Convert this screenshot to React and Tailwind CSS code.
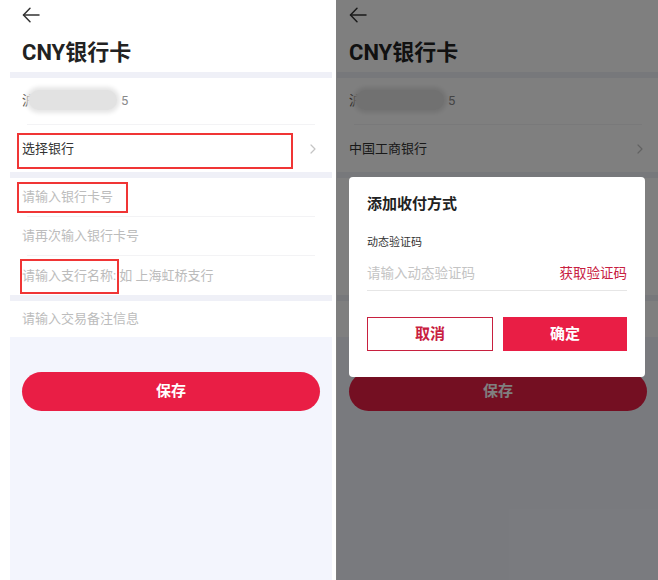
import React from "react";

const FONT = { fontFamily: "Roboto, 'Noto Sans CJK SC', 'Noto Sans', sans-serif" };

function Arrow() {
  return (
    <svg width="18" height="16" viewBox="0 0 18 16" fill="none" stroke="#333" strokeWidth="1.5" strokeLinecap="round" strokeLinejoin="round">
      <path d="M1.5 8H17" />
      <path d="M8 1.2L1.5 8L8 14.8" />
    </svg>
  );
}

function Chevron() {
  return (
    <svg width="6" height="10" viewBox="0 0 6 10" fill="none" stroke="#c4c4c4" strokeWidth="1.2" strokeLinecap="round" strokeLinejoin="round">
      <path d="M1 1L5 5L1 9" />
    </svg>
  );
}

function Sep() {
  return <div className="mx-[17px] h-px bg-[#f3f3f5]" />;
}

function Band() {
  return <div className="h-[6px] bg-[#eff0f7]" />;
}

function RedBox({ className }) {
  return <div className={"absolute border-2 border-[#f03535] " + className} />;
}

function Screen({ right }) {
  return (
    <div className="flex h-full w-[322px] flex-col bg-white">
      <div className="flex h-[72px] flex-col px-3 pt-[7px]">
        <Arrow />
        <div className="mt-[16px] text-[22px] font-bold leading-[28px] text-[#222]">CNY银行卡</div>
      </div>
      <Band />
      <div className="relative flex h-[46px] items-center px-3 text-[13px] text-[#444]">
        <span>沪</span>
        <div className="absolute left-[19px] top-[12px] h-[20px] w-[88px] rounded-full bg-[#e2e2e2] shadow-[0_0_4px_3px_#e6e6e6]" />
        <span className="ml-[86px] text-[#888]">5</span>
      </div>
      <Sep />
      <div className="relative flex h-[47px] items-center justify-between px-3 pr-[16px] text-[13px] text-[#333]">
        <span>{right ? "中国工商银行" : "选择银行"}</span>
        <Chevron />
        {!right && <RedBox className="left-[7px] top-[8px] h-[36px] w-[276px]" />}
      </div>
      <Band />
      <div className="relative flex h-[38px] items-center px-3 text-[13px] text-[#bcbcbc]">
        {!right && <span>请输入银行卡号</span>}
        {!right && <RedBox className="left-[7px] top-[4px] h-[31px] w-[111px]" />}
      </div>
      <Sep />
      <div className="flex h-[38px] items-center px-3 text-[13px] text-[#bcbcbc]">
        {!right && <span>请再次输入银行卡号</span>}
      </div>
      <Sep />
      <div className="relative flex h-[39px] items-center px-3 text-[13px] text-[#bcbcbc]">
        {!right && <span>请输入支行名称: 如 上海虹桥支行</span>}
        {!right && <RedBox className="left-[10px] top-[3px] h-[35px] w-[99px]" />}
      </div>
      <Band />
      <div className="flex h-[36px] items-center px-3 text-[13px] text-[#bcbcbc]">
        {!right && <span>请输入交易备注信息</span>}
      </div>
      <div className="flex flex-1 flex-col bg-[#f3f5fd] px-3 pt-[35px]">
        <div className="flex h-[39px] items-center justify-center rounded-full bg-[#e91e45] text-[15px] font-bold text-white">
          保存
        </div>
      </div>
    </div>
  );
}

export default function App() {
  return (
    <div className="flex h-[580px] w-[658px] overflow-hidden bg-white" style={FONT}>
      <div className="h-full w-[332px] pl-[10px]">
        <Screen />
      </div>
      <div className="ml-[4px] relative h-full w-[322px] overflow-hidden">
        <div className="ml-px h-full">
          <Screen right />
        </div>
        <div className="absolute inset-0 bg-black/50">
          <div className="mx-[13px] mt-[177px] rounded bg-white px-[18px] pb-[26px] pt-[16px]">
            <div className="text-[15px] font-bold leading-[22px] text-[#222]">添加收付方式</div>
            <div className="mt-[20px] text-[11px] leading-[16px] text-[#333]">动态验证码</div>
            <div className="flex items-center justify-between border-b border-[#e6e6e6] pb-[6px] pt-[11px] text-[13.5px] leading-[22px]">
              <span className="text-[#c4c4c4]">请输入动态验证码</span>
              <span className="text-[#c8203f]">获取验证码</span>
            </div>
            <div className="mt-[26px] flex gap-[10px]">
              <div className="flex h-[34px] flex-1 items-center justify-center border border-[#c8203f] text-[15px] font-bold text-[#c8203f]">
                取消
              </div>
              <div className="flex h-[34px] flex-1 items-center justify-center bg-[#e91e45] text-[15px] font-bold text-white">
                确定
              </div>
            </div>
          </div>
        </div>
      </div>
    </div>
  );
}
